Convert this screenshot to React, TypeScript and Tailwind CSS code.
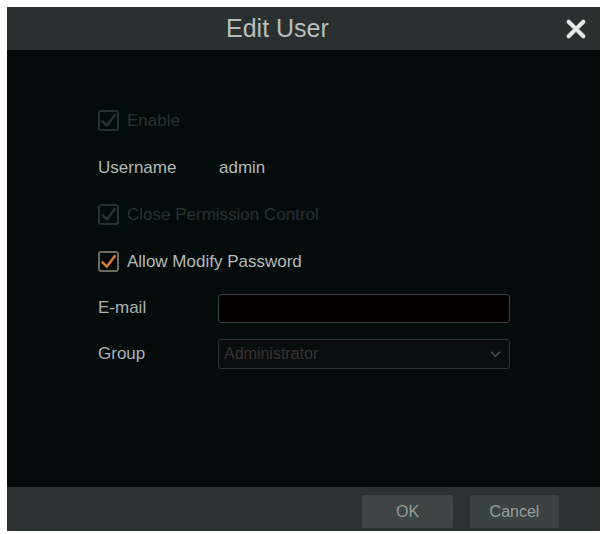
import React, { useState } from "react";

type CheckProps = {
  checked: boolean;
  disabled?: boolean;
  label: string;
  onChange?: (v: boolean) => void;
};

function CheckRow({ checked, disabled, label, onChange }: CheckProps) {
  const box = disabled ? "border-[#273131]" : "border-[#6b6a5e]";
  const tick = disabled ? "#273131" : "#d9782c";
  return (
    <button
      type="button"
      disabled={disabled}
      onClick={() => onChange?.(!checked)}
      className="flex h-[47px] items-center gap-[8px] text-left"
    >
      <span
        className={`flex h-[21px] w-[21px] items-center justify-center rounded-[3px] border-2 ${box}`}
      >
        {checked && (
          <svg viewBox="0 0 20 20" className="h-[18px] w-[18px]">
            <path
              d="M3 10.5 L8 15.5 L17.5 3"
              fill="none"
              stroke={tick}
              strokeWidth="3"
              strokeLinecap="round"
              strokeLinejoin="round"
            />
          </svg>
        )}
      </span>
      <span
        className={
          disabled
            ? "text-[17px] text-[#283232]"
            : "text-[17px] text-[#b5bab9]"
        }
      >
        {label}
      </span>
    </button>
  );
}

export default function App() {
  const [allowModify, setAllowModify] = useState(true);
  const [email, setEmail] = useState("");

  return (
    <div
      className="flex h-[534px] w-[604px] bg-white pl-[7px] pt-[7px]"
      style={{ fontFamily: '"Liberation Sans", Arial, sans-serif' }}
    >
      <div className="flex h-[524px] w-[593px] flex-col bg-[#030b0b]">
        {/* header */}
        <div className="flex h-[43px] items-center bg-[#2a302f]">
          <span className="flex-1 pl-[219px] text-[25px] leading-none text-[#b8bdbc]">
            Edit User
          </span>
          <button
            type="button"
            aria-label="Close"
            className="mr-[12px] flex h-[24px] w-[24px] items-center justify-center"
          >
            <svg viewBox="0 0 24 24" className="h-[22px] w-[22px]">
              <path
                d="M4 4 L20 20 M20 4 L4 20"
                stroke="#e6e8e8"
                strokeWidth="4.5"
                strokeLinecap="round"
              />
            </svg>
          </button>
        </div>

        {/* body */}
        <div className="flex flex-1 flex-col pl-[91px] pt-[47px]">
          <CheckRow checked disabled label="Enable" />

          <div className="flex h-[47px] items-center text-[17px] text-[#b5bab9]">
            <span className="w-[121px]">Username</span>
            <span>admin</span>
          </div>

          <CheckRow checked disabled label="Close Permission Control" />

          <CheckRow
            checked={allowModify}
            label="Allow Modify Password"
            onChange={setAllowModify}
          />

          <div className="flex h-[46px] items-center text-[17px] text-[#aeb3b2]">
            <span className="w-[120px]">E-mail</span>
            <input
              value={email}
              onChange={(e) => setEmail(e.target.value)}
              className="h-[29px] w-[292px] rounded-[3px] border border-[#3a4241] bg-[#020000] px-2 text-[15px] text-[#b5bab9] outline-none"
            />
          </div>

          <div className="flex h-[46px] items-center text-[17px] text-[#aeb3b2]">
            <span className="w-[120px]">Group</span>
            <div className="flex h-[30px] w-[292px] items-center justify-between rounded-[3px] border border-[#2d3534] bg-[#0a0d0d] pl-[5px] pr-[8px]">
              <span className="text-[16px] text-[#383333]">Administrator</span>
              <svg viewBox="0 0 12 8" className="h-[7px] w-[11px]">
                <path
                  d="M1 1 L6 6 L11 1"
                  fill="none"
                  stroke="#4a5150"
                  strokeWidth="1.8"
                />
              </svg>
            </div>
          </div>
        </div>

        {/* footer */}
        <div className="flex h-[44px] items-start justify-end gap-[17px] bg-[#2c3232] pr-[41px] pt-[8px]">
          <button
            type="button"
            className="h-[33px] w-[91px] rounded-[2px] bg-[#3e4645] text-[16px] text-[#979d9c]"
          >
            OK
          </button>
          <button
            type="button"
            className="h-[33px] w-[89px] rounded-[2px] bg-[#3b4342] text-[16px] text-[#979d9c]"
          >
            Cancel
          </button>
        </div>
      </div>
    </div>
  );
}
